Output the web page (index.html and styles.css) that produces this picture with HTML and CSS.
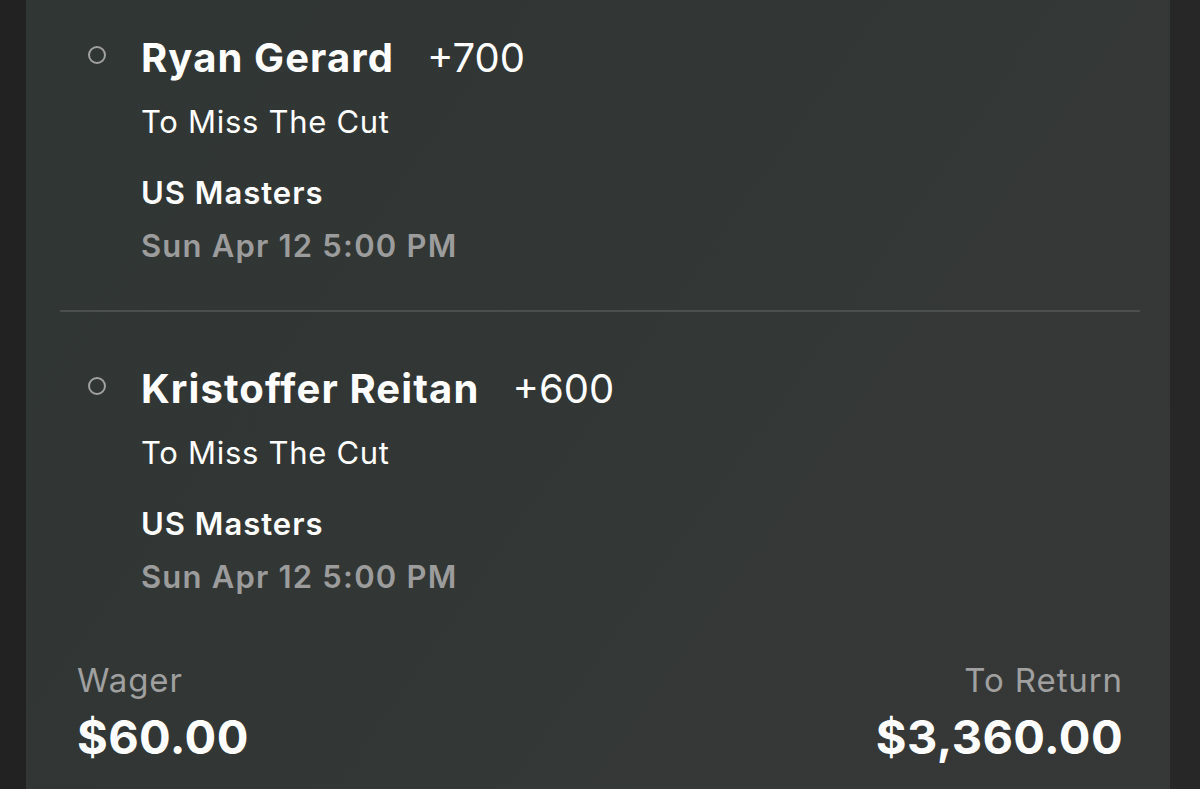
FILE: index.html
```html
<!DOCTYPE html>
<html>
<head>
<meta charset="utf-8">
<link rel="stylesheet" href="styles.css">
</head>
<body>
<div class="frame">
  <div class="card">
    <div class="leg">
      <span class="dot"></span>
      <div class="leg-body">
        <div class="title"><span class="name">Ryan Gerard</span><span class="odds">+700</span></div>
        <div class="market">To Miss The Cut</div>
        <div class="event">US Masters</div>
        <div class="time">Sun Apr 12 5:00 PM</div>
      </div>
    </div>
    <div class="divider"></div>
    <div class="leg leg2">
      <span class="dot"></span>
      <div class="leg-body">
        <div class="title"><span class="name">Kristoffer Reitan</span><span class="odds">+600</span></div>
        <div class="market">To Miss The Cut</div>
        <div class="event">US Masters</div>
        <div class="time">Sun Apr 12 5:00 PM</div>
      </div>
    </div>
    <div class="totals">
      <div class="total">
        <div class="label">Wager</div>
        <div class="amount">$60.00</div>
      </div>
      <div class="total right">
        <div class="label">To Return</div>
        <div class="amount">$3,360.00</div>
      </div>
    </div>
  </div>
</div>
</body>
</html>
```
FILE: styles.css
```css
html, body {
  margin: 0;
  padding: 0;
  height: 100%;
}
body {
  background: #242424;
  font-family: "Inter", "Roboto", sans-serif;
  color: #ffffff;
  overflow: hidden;
}
.frame {
  display: flex;
  height: 789px;
  padding-left: 26px;
  padding-right: 30px;
  background: linear-gradient(90deg, #222222 0, #222222 26px, transparent 26px), #272727;
}
.card {
  flex: 1;
  background: linear-gradient(125deg, #303634 0%, #323735 45%, #363837 100%);
  display: flex;
  flex-direction: column;
  padding: 0 47px 0 51px;
}
.leg {
  display: flex;
  align-items: flex-start;
  padding-top: 33px;
}
.leg2 {
  padding-top: 52px;
}
.dot {
  width: 14px;
  height: 14px;
  border: 2px solid #a0a0a0;
  border-radius: 50%;
  margin: 13px 0 0 11px;
  flex: none;
}
.leg-body {
  margin-left: 35px;
  display: flex;
  flex-direction: column;
}
.title {
  display: flex;
  align-items: baseline;
  gap: 33px;
  line-height: 50px;
}
.name {
  font-size: 40px;
  font-weight: 700;
  letter-spacing: 1.1px;
}
.odds {
  font-size: 40px;
  font-weight: 400;
}
.market {
  font-size: 31px;
  letter-spacing: 0.7px;
  line-height: 40px;
  margin-top: 19px;
}
.event {
  font-size: 31px;
  font-weight: 600;
  letter-spacing: 1px;
  line-height: 40px;
  margin-top: 31px;
}
.time {
  font-size: 31px;
  font-weight: 600;
  letter-spacing: 1.2px;
  line-height: 40px;
  margin-top: 13px;
  color: #9c9c9c;
}
.divider {
  height: 2px;
  background: #4b4f4e;
  margin: 44px -17px 0 -17px;
}
.totals {
  display: flex;
  justify-content: space-between;
  margin-top: 63px;
}
.total {
  display: flex;
  flex-direction: column;
}
.total.right {
  align-items: flex-end;
}
.label {
  font-size: 33px;
  letter-spacing: 0.9px;
  color: #a0a0a0;
  line-height: 40px;
}
.amount {
  font-size: 47px;
  font-weight: 700;
  letter-spacing: 0.4px;
  line-height: 56px;
  margin-top: 9px;
}
```
